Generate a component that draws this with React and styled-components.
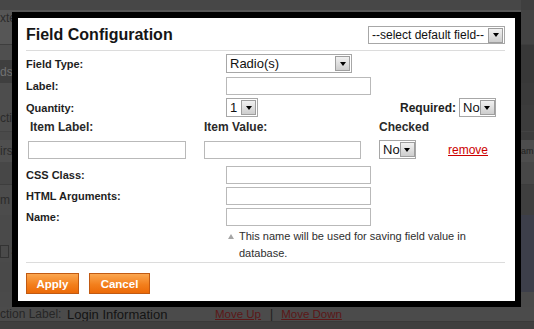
import React from 'react';
import styled, { createGlobalStyle } from 'styled-components';

const GlobalStyle = createGlobalStyle`
  html, body {
    margin: 0;
    padding: 0;
    background: #4a4a4a;
  }
  body {
    font-family: "Liberation Sans", Arial, sans-serif;
  }
  #root {
    position: relative;
    width: 534px;
    height: 329px;
    overflow: hidden;
  }
`;

/* dimmed page behind the dialog */
const Backdrop = styled.div`
  display: flex;
  flex-direction: column;
  width: 534px;
  height: 329px;
`;

const Band = styled.div`
  flex: none;
  display: flex;
  align-items: center;
  justify-content: space-between;
  height: ${(p) => p.h}px;
  background: ${(p) => p.bg};
  border-bottom: ${(p) => (p.line ? `1px solid ${p.line}` : 'none')};
  box-sizing: border-box;
  font-size: 12px;
  color: ${(p) => p.fg || '#2b2b2b'};
  white-space: nowrap;
  overflow: hidden;
`;

const BandText = styled.span`
  display: flex;
  align-items: center;
  gap: 2px;
`;

const SideCell = styled.span`
  align-self: stretch;
  width: 13px;
  background: ${(p) => p.bg};
  display: flex;
  align-items: center;
  font-size: 9px;
  color: #222;
  overflow: hidden;
`;

const GhostBox = styled.span`
  display: inline-block;
  width: 7px;
  height: 11px;
  border: 1px solid #333;
`;

const BottomRow = styled(Band)`
  justify-content: flex-start;
`;

const PageLabel = styled.span`
  width: 67px;
  font-size: 12px;
  color: #262626;
`;

const PageValue = styled.span`
  width: 148px;
  font-size: 13px;
  color: #141414;
`;

const PageLink = styled.span`
  font-size: 11.5px;
  color: #5c1717;
  text-decoration: underline;
`;

const PageSep = styled.span`
  margin: 0 8px 0 9px;
  font-size: 12px;
  color: #1c1c1c;
`;

/* dialog */
const Modal = styled.div`
  position: absolute;
  top: 12px;
  left: 12px;
  width: 509px;
  height: 295px;
  box-sizing: border-box;
  border: 6px solid #000;
  background: #fff;
  padding: 0 10px 0 8px;
  display: flex;
  flex-direction: column;
  color: #1e1e1e;
`;

const Header = styled.div`
  display: flex;
  align-items: center;
  justify-content: space-between;
  padding: 8px 0 6px;
  border-bottom: 1px solid #dcdcdc;
`;

const Title = styled.h2`
  margin: 0;
  font-size: 16px;
  font-weight: bold;
  color: #151515;
  line-height: 18px;
`;

const Form = styled.div`
  display: flex;
  flex-direction: column;
  padding-top: 3px;
`;

const Row = styled.div`
  display: grid;
  grid-template-columns: 200px 1fr;
  align-items: center;
  height: ${(p) => p.h || 19}px;
  margin-bottom: 3px;
`;

const Label = styled.label`
  font-size: ${(p) => p.fs || 11}px;
  font-weight: bold;
  color: #1e1e1e;
  white-space: nowrap;
`;

const Controls = styled.div`
  display: flex;
  align-items: center;
`;

const RightGroup = styled.div`
  display: flex;
  align-items: center;
  gap: 3px;
  margin-left: auto;
  margin-right: 9px;
`;

const SelectBox = styled.div`
  box-sizing: border-box;
  width: ${(p) => p.w}px;
  height: ${(p) => p.h || 19}px;
  border: 1px solid #a7a7a7;
  background: #fff;
  display: flex;
  align-items: center;
  justify-content: space-between;
  padding-left: 3px;
  font-size: ${(p) => p.fs || 13}px;
  color: #111;
  white-space: nowrap;
  overflow: hidden;
`;

const Arrow = styled.span`
  flex: none;
  box-sizing: border-box;
  width: 15px;
  height: 15px;
  margin-right: 1px;
  border: 1px solid #9e9e9e;
  background: linear-gradient(#f1f1f1, #cdcdcd);
  display: flex;
  align-items: center;
  justify-content: center;

  &::after {
    content: '';
    border-left: 3.5px solid transparent;
    border-right: 3.5px solid transparent;
    border-top: 4px solid #000;
  }
`;

const TextInput = styled.input`
  box-sizing: border-box;
  width: ${(p) => p.w}px;
  height: 18px;
  margin: 0;
  padding: 0 3px;
  border: 1px solid #b9b9b9;
  background: #fff;
  font-size: 12px;
  outline: none;
`;

const ItemGrid = styled.div`
  display: grid;
  grid-template-columns: 176px 175px 69px auto;
  align-items: center;
  padding-left: 2px;
`;

const ItemHead = styled(ItemGrid)`
  height: 14px;
  margin: 0 0 6px;
`;

const ItemBody = styled(ItemGrid)`
  height: 18px;
  margin-bottom: 8px;
`;

const HeadLabel = styled.span`
  padding-left: ${(p) => p.indent || 0}px;
  font-size: 12px;
  font-weight: bold;
  color: #2a2a2a;
`;

const RemoveLink = styled.a`
  font-size: 12px;
  color: #cc0000;
  text-decoration: underline;
  cursor: pointer;
`;

const Note = styled.div`
  display: flex;
  align-items: flex-start;
  margin-left: 202px;
  margin-top: -1px;
  height: 34px;
`;

const NoteIcon = styled.span`
  flex: none;
  margin-top: 6px;
  width: 0;
  height: 0;
  border-left: 3px solid transparent;
  border-right: 3px solid transparent;
  border-bottom: 5px solid #a5a5a5;
`;

const NoteText = styled.p`
  margin: 0 0 0 5px;
  width: 232px;
  font-size: 11px;
  line-height: 17px;
  color: #2e2e2e;
`;

const Footer = styled.div`
  display: flex;
  gap: 10px;
  padding-top: 10px;
  border-top: 1px solid #dcdcdc;
`;

const Button = styled.button`
  box-sizing: border-box;
  width: ${(p) => p.w}px;
  height: 21px;
  padding: 0;
  border: 1px solid #c15a12;
  background: linear-gradient(#fba64f, #f3801d 55%, #ec6a07);
  color: #fff;
  font-family: inherit;
  font-size: 11.5px;
  font-weight: bold;
  cursor: pointer;
`;

function Select({ w, h, fs, value }) {
  return (
    <SelectBox w={w} h={h} fs={fs}>
      <span>{value}</span>
      <Arrow />
    </SelectBox>
  );
}

export default function App() {
  return (
    <>
      <GlobalStyle />
      <Backdrop>
        <Band h={10} bg="#474747"><span /><SideCell bg="#3f3f3f" /></Band>
        <Band h={16} bg="#565656"><BandText>xte</BandText><SideCell bg="#434343" /></Band>
        <Band h={19} bg="#565656" line="#3e3e3e"><span /><SideCell bg="#434343" /></Band>
        <Band h={15} bg="#4f4f4f"><span /><SideCell bg="#383838" /></Band>
        <Band h={23} bg="#3f3f3f" fg="#727272"><BandText>ds</BandText><SideCell bg="#383838" /></Band>
        <Band h={22} bg="#4d4d4d"><span /><SideCell bg="#3a3a3a" /></Band>
        <Band h={27} bg="#4d4d4d" line="#434343"><BandText>cti</BandText><SideCell bg="#3c3c3c" /></Band>
        <Band h={8} bg="#4a4a4a"><span /><SideCell bg="#3c3c3c" /></Band>
        <Band h={22} bg="#4f4f4f"><BandText>irs</BandText><SideCell bg="#4d4d4d">am</SideCell></Band>
        <Band h={23} bg="#474747" line="#3d3d3d"><span /><SideCell bg="#474747" /></Band>
        <Band h={30} bg="#4c4c4c"><BandText>m</BandText><SideCell bg="#3f3f3f" /></Band>
        <Band h={25} bg="#4a4a4a"><span /><SideCell bg="#3d3f4a" /></Band>
        <Band h={22} bg="#4a4a4a"><BandText><GhostBox />S</BandText><SideCell bg="#3d3f4a" /></Band>
        <Band h={30} bg="#494949"><span /><SideCell bg="#3d3f4a" /></Band>
        <Band h={15} bg="#4a4a4a"><span /><SideCell bg="#4a4a4a" /></Band>
        <BottomRow h={15} bg="#4b4b4b" line="#3a3a3a">
          <PageLabel>ction Label:</PageLabel>
          <PageValue>Login Information</PageValue>
          <PageLink>Move Up</PageLink>
          <PageSep>|</PageSep>
          <PageLink>Move Down</PageLink>
        </BottomRow>
        <Band h={7} bg="#3f3f3f"><span /><SideCell bg="#3f3f3f" /></Band>
      </Backdrop>

      <Modal>
        <Header>
          <Title>Field Configuration</Title>
          <Select w={137} h={18} fs={12} value="--select default field--" />
        </Header>

        <Form>
          <Row>
            <Label>Field Type:</Label>
            <Controls><Select w={126} value="Radio(s)" /></Controls>
          </Row>
          <Row>
            <Label>Label:</Label>
            <Controls><TextInput w={145} readOnly /></Controls>
          </Row>
          <Row>
            <Label>Quantity:</Label>
            <Controls>
              <Select w={32} value="1" />
              <RightGroup>
                <Label fs={12}>Required:</Label>
                <Select w={37} value="No" />
              </RightGroup>
            </Controls>
          </Row>

          <ItemHead>
            <HeadLabel indent={2}>Item Label:</HeadLabel>
            <HeadLabel>Item Value:</HeadLabel>
            <HeadLabel>Checked</HeadLabel>
            <span />
          </ItemHead>
          <ItemBody>
            <TextInput w={158} readOnly />
            <TextInput w={157} readOnly />
            <Select w={37} value="No" />
            <RemoveLink>remove</RemoveLink>
          </ItemBody>

          <Row h={18}>
            <Label>CSS Class:</Label>
            <Controls><TextInput w={145} readOnly /></Controls>
          </Row>
          <Row h={18}>
            <Label>HTML Arguments:</Label>
            <Controls><TextInput w={145} readOnly /></Controls>
          </Row>
          <Row h={18}>
            <Label>Name:</Label>
            <Controls><TextInput w={145} readOnly /></Controls>
          </Row>

          <Note>
            <NoteIcon />
            <NoteText>This name will be used for saving field value in database.</NoteText>
          </Note>
        </Form>

        <Footer>
          <Button w={53}>Apply</Button>
          <Button w={61}>Cancel</Button>
        </Footer>
      </Modal>
    </>
  );
}
